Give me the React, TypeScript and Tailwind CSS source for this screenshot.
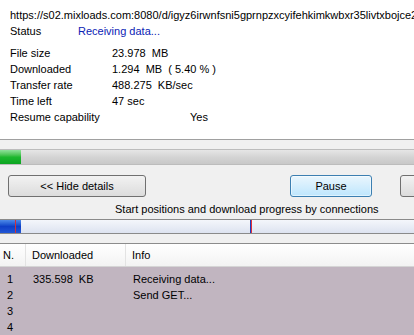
import React from 'react';

const info = [
  { label: 'File size', value: '23.978  MB' },
  { label: 'Downloaded', value: '1.294  MB  ( 5.40 % )' },
  { label: 'Transfer rate', value: '488.275  KB/sec' },
  { label: 'Time left', value: '47 sec' },
];

const connections = [
  { n: '1', size: '335.598  KB', info: 'Receiving data...' },
  { n: '2', size: '', info: 'Send GET...' },
  { n: '3', size: '', info: '' },
  { n: '4', size: '', info: '' },
];

export default function App() {
  return (
    <div className="w-[414px] h-[335px] overflow-hidden bg-[#f0f0f0] text-[11px] text-black font-['Liberation_Sans',Arial,sans-serif] whitespace-pre">
      {/* details block */}
      <div className="h-[140px] bg-white border-b border-[#a0a0a0] pl-[10px] pt-[7px]">
        <div className="h-[16px] leading-[16px] overflow-hidden">
          https://s02.mixloads.com:8080/d/igyz6irwnfsni5gprnpzxcyifehkimkwbxr35livtxbojce2
        </div>
        <div className="flex h-[16px] leading-[16px]">
          <span className="w-[68px]">Status</span>
          <span className="text-[#0b22b4]">Receiving data...</span>
        </div>
        <div className="mt-[6px]">
          {info.map((row) => (
            <div key={row.label} className="flex h-[16px] leading-[16px]">
              <span className="w-[102px]">{row.label}</span>
              <span>{row.value}</span>
            </div>
          ))}
          <div className="flex h-[16px] leading-[16px]">
            <span className="w-[180px]">Resume capability</span>
            <span>Yes</span>
          </div>
        </div>
      </div>

      {/* total progress */}
      <div className="pt-[9px]">
        <div className="h-[16px] border-y border-[#bcbcbc] bg-gradient-to-b from-[#e6e6e6] via-[#d4d4d4] to-[#c8c8c8] flex">
          <div className="w-[21px] h-full bg-gradient-to-b from-[#8ee29a] via-[#1cb82e] to-[#0ca522]" />
        </div>
      </div>

      {/* buttons */}
      <div className="relative h-[33px] mt-[10px]">
        <div className="absolute left-[8px] top-0 w-[138px] h-[22px] rounded-[3px] border border-[#707070] bg-gradient-to-b from-[#f2f2f2] to-[#dcdcdc] flex items-center justify-center">
          {'<< Hide details'}
        </div>
        <div className="absolute left-[290px] top-0 w-[82px] h-[22px] rounded-[3px] border border-[#3c7fb1] bg-gradient-to-b from-[#eaf6fd] to-[#bee6fd] shadow-[inset_0_0_0_1px_#ffffff80] flex items-center justify-center">
          Pause
        </div>
        <div className="absolute left-[400px] top-0 w-[82px] h-[22px] rounded-[3px] border border-[#707070] bg-gradient-to-b from-[#f2f2f2] to-[#dcdcdc]" />
      </div>
      <div className="h-[11px] -mt-[4px] pl-[115px] leading-[11px]">
        Start positions and download progress by connections
      </div>

      {/* connection bar */}
      <div className="mt-[4px] h-[15px] border-y border-[#8a8a8a] bg-gradient-to-b from-[#f4f6fb] to-[#dde3f0] relative">
        <div className="absolute left-0 top-0 w-[21px] h-full bg-gradient-to-b from-[#4f8ae8] via-[#0f3fc6] to-[#2357d6]" />
        <div className="absolute left-[15px] top-0 w-px h-full bg-[#d2303a]" />
        <div className="absolute left-[250px] top-0 w-px h-full bg-[#1c3fbd]" />
        <div className="absolute left-[251px] top-0 w-px h-full bg-[#e0303a]" />
      </div>

      {/* connections table */}
      <div className="mt-[9px] border-t border-[#8c8c8c]">
        <div className="flex h-[23px] items-center bg-gradient-to-b from-white to-[#f3f3f3] border-b border-[#d5d5d5]">
          <div className="w-[26px] pl-[3px] h-full flex items-center border-r border-[#e3e3e3]">N.</div>
          <div className="w-[100px] pl-[6px] h-full flex items-center border-r border-[#e3e3e3]">Downloaded</div>
          <div className="pl-[6px]">Info</div>
        </div>
        <div className="bg-[#c1b5c0] pt-[4px] h-[80px]">
          {connections.map((c) => (
            <div key={c.n} className="flex h-[16px] leading-[16px]">
              <div className="w-[26px] pl-[7px]">{c.n}</div>
              <div className="w-[100px] pl-[7px]">{c.size}</div>
              <div className="pl-[7px]">{c.info}</div>
            </div>
          ))}
        </div>
      </div>
    </div>
  );
}
